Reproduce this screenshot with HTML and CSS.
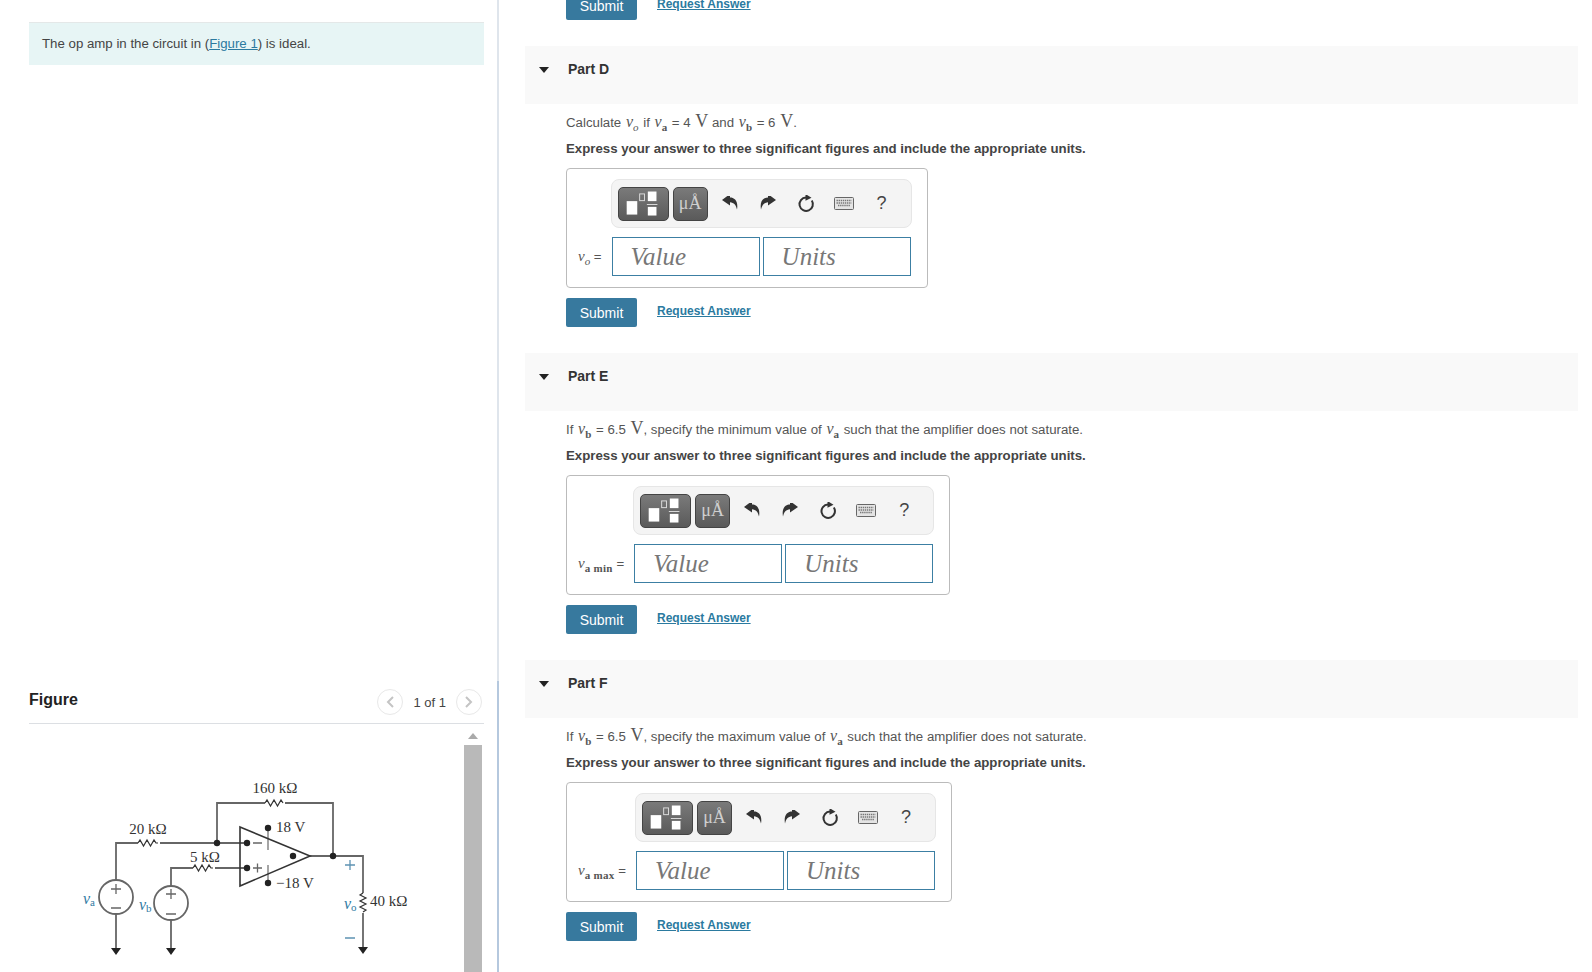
FILE: index.html

```html
<!DOCTYPE html>
<html lang="en">
<head>
  <meta charset="UTF-8">
  <title>Op Amp Problem</title>
  <link rel="stylesheet" href="styles.css">
</head>
<body>
  <svg class="defs" width="0" height="0">
    <defs>
      <symbol id="ic-template" viewBox="0 0 51 34">
        <rect x="8" y="14" width="11" height="14" fill="#fff"/>
        <rect x="21.500" y="6.500" width="5" height="7" fill="none" stroke="#ddd"/>
        <rect x="30" y="4" width="9" height="10" fill="#fff"/>
        <rect x="29" y="17" width="11" height="1" fill="#ddd"/>
        <rect x="30" y="20" width="9" height="9" fill="#fff"/>
      </symbol>
      <symbol id="ic-undo" viewBox="0 2 16 16">
        <path d="M0 6 L8 0 V3.500 C12.500 3.500 16.500 7 15 15.500 C14 11 12 8.500 8 8.200 V11.500 Z" fill="#333"/>
      </symbol>
      <symbol id="ic-redo" viewBox="0 2 16 16">
        <path d="M16 6 L8 0 V3.500 C3.500 3.500 -0.500 7 1 15.500 C2 11 4 8.500 8 8.200 V11.500 Z" fill="#333"/>
      </symbol>
      <symbol id="ic-reset" viewBox="0 1 18 18">
        <path d="M9 3.500 A6.700 6.700 0 1 0 14.800 6.500" fill="none" stroke="#333" stroke-width="2"/>
        <path d="M8.500 0 L14.500 3.800 L8.500 6.800 Z" fill="#333"/>
      </symbol>
      <symbol id="ic-keys" viewBox="0 0 20 13">
        <rect x="0.500" y="0.500" width="19" height="12" rx="1" fill="#e4e4e4" stroke="#666"/>
        <path d="M2.500 3.500 H17.500 M2.500 6 H17.500 M4 8.500 H16" stroke="#777" stroke-width="1.300" stroke-dasharray="1.400 .7"/>
      </symbol>
    </defs>
  </svg>

  <div class="page">
    <div class="left">
      <div class="intro">The op amp in the circuit in (<a href="#">Figure 1</a>) is ideal.</div>

      <div class="figure-head">
        <strong>Figure</strong>
        <div class="pager">
          <span class="pager-btn">
            <svg width="8" height="12" viewBox="0 0 8 12"><path d="M7 1 L2 6 L7 11" fill="none" stroke="#c4c4c4" stroke-width="2"/></svg>
          </span>
          <span class="pager-text">1 of 1</span>
          <span class="pager-btn">
            <svg width="8" height="12" viewBox="0 0 8 12"><path d="M1 1 L6 6 L1 11" fill="none" stroke="#c4c4c4" stroke-width="2"/></svg>
          </span>
        </div>
      </div>

      <div class="figure-body">
        <svg class="circuit" width="432" height="248" viewBox="29 724 432 248">
          <g class="wire">
            <path d="M217 843 V803 H265 M285 803 H333 V856"/>
            <path d="M265 803 l2 -3 l3.500 6 l3.500 -6 l3.500 6 l3.500 -6 l2 3" class="zig"/>
            <path d="M116 880 V843 H138 M160 843 H247"/>
            <path d="M138 843 l2 -3 l3.500 6 l3.500 -6 l3.500 6 l3.500 -6 l2 3 l2 0" class="zig"/>
            <path d="M171 886 V868 H193 M215 868 H247"/>
            <path d="M193 868 l2 -3 l3.500 6 l3.500 -6 l3.500 6 l3.500 -6 l2 3 l2 0" class="zig"/>
            <path d="M116 914 V948 M171 920 V948 M310 856 H363 V893 M363 913 V948"/>
            <path d="M363 893 l-3 2 l6 3 l-6 3 l6 3 l-6 3 l6 3 l-3 2" class="zig"/>
            <path d="M268 828 V850 M268 865 V883" class="thin"/>
            <circle cx="116" cy="897" r="17" class="source"/>
            <circle cx="171" cy="903" r="17" class="source"/>
          </g>
          <path d="M240 827 L310 856 L240 886 Z" class="amp"/>
          <g class="dot">
            <circle cx="217" cy="843" r="3.200"/>
            <circle cx="247" cy="843" r="3.200"/>
            <circle cx="247" cy="868" r="3.200"/>
            <circle cx="293" cy="856" r="3.200"/>
            <circle cx="333" cy="856" r="3.200"/>
            <circle cx="268" cy="828" r="3.200"/>
            <circle cx="268" cy="883" r="3.200"/>
            <path d="M111 948 H121 L116 955 Z M166 948 H176 L171 955 Z M358 947 H368 L363 954 Z"/>
          </g>
          <g class="sign">
            <path d="M111 889 H121 M116 884 V894 M111 908 H121"/>
            <path d="M166 894 H176 M171 889 V899 M166 914 H176"/>
            <path d="M253 843 H262 M253 868 H262 M257.500 863.500 V872.500"/>
          </g>
          <g class="sign-blue">
            <path d="M345 865 H355 M350 860 V870 M345 938 H355"/>
          </g>
          <text x="275" y="793" class="lbl mid">160 kΩ</text>
          <text x="148" y="834" class="lbl mid">20 kΩ</text>
          <text x="205" y="862" class="lbl mid">5 kΩ</text>
          <text x="276" y="832" class="lbl">18 V</text>
          <text x="276" y="888" class="lbl">−18 V</text>
          <text x="370" y="906" class="lbl">40 kΩ</text>
          <text x="83" y="904" class="var">v<tspan class="var-sub" dy="2">a</tspan></text>
          <text x="139" y="910" class="var">v<tspan class="var-sub" dy="2">b</tspan></text>
          <text x="344" y="909" class="var">v<tspan class="var-sub" dy="2">o</tspan></text>
        </svg>
        <div class="scroll">
          <span class="scroll-up"></span>
          <span class="scroll-thumb"></span>
        </div>
      </div>
    </div>

    <div class="right">
      <div class="actions first">
        <button class="submit">Submit</button>
        <a class="req" href="#">Request Answer</a>
      </div>

      <section class="part">
        <div class="part-head"><span class="caret"></span>Part D</div>
        <p class="q">Calculate <i class="v">v<sub>o</sub></i> if <i class="v">v<sub class="up">a</sub></i> = 4 <span class="unit">V</span> and <i class="v">v<sub class="up">b</sub></i> = 6 <span class="unit">V</span>.</p>
        <p class="hint">Express your answer to three significant figures and include the appropriate units.</p>
        <div class="answer">
          <div class="toolbar">
            <span class="tool-btn wide"><svg width="51" height="34"><use href="#ic-template"/></svg></span>
            <span class="tool-btn mu">μÅ</span>
            <span class="tool"><svg width="16" height="16"><use href="#ic-undo"/></svg></span>
            <span class="tool"><svg width="16" height="16"><use href="#ic-redo"/></svg></span>
            <span class="tool"><svg width="18" height="18"><use href="#ic-reset"/></svg></span>
            <span class="tool"><svg width="20" height="13"><use href="#ic-keys"/></svg></span>
            <span class="tool help">?</span>
          </div>
          <label class="ans-label"><i class="v">v<sub>o</sub></i> =</label>
          <div class="inputs">
            <input type="text" placeholder="Value">
            <input type="text" placeholder="Units">
          </div>
        </div>
        <div class="actions">
          <button class="submit">Submit</button>
          <a class="req" href="#">Request Answer</a>
        </div>
      </section>

      <section class="part">
        <div class="part-head"><span class="caret"></span>Part E</div>
        <p class="q">If <i class="v">v<sub class="up">b</sub></i> = 6.5 <span class="unit">V</span>, specify the minimum value of <i class="v">v<sub class="up">a</sub></i> such that the amplifier does not saturate.</p>
        <p class="hint">Express your answer to three significant figures and include the appropriate units.</p>
        <div class="answer">
          <div class="toolbar">
            <span class="tool-btn wide"><svg width="51" height="34"><use href="#ic-template"/></svg></span>
            <span class="tool-btn mu">μÅ</span>
            <span class="tool"><svg width="16" height="16"><use href="#ic-undo"/></svg></span>
            <span class="tool"><svg width="16" height="16"><use href="#ic-redo"/></svg></span>
            <span class="tool"><svg width="18" height="18"><use href="#ic-reset"/></svg></span>
            <span class="tool"><svg width="20" height="13"><use href="#ic-keys"/></svg></span>
            <span class="tool help">?</span>
          </div>
          <label class="ans-label"><i class="v">v<sub class="up">a min</sub></i> =</label>
          <div class="inputs">
            <input type="text" placeholder="Value">
            <input type="text" placeholder="Units">
          </div>
        </div>
        <div class="actions">
          <button class="submit">Submit</button>
          <a class="req" href="#">Request Answer</a>
        </div>
      </section>

      <section class="part">
        <div class="part-head"><span class="caret"></span>Part F</div>
        <p class="q">If <i class="v">v<sub class="up">b</sub></i> = 6.5 <span class="unit">V</span>, specify the maximum value of <i class="v">v<sub class="up">a</sub></i> such that the amplifier does not saturate.</p>
        <p class="hint">Express your answer to three significant figures and include the appropriate units.</p>
        <div class="answer">
          <div class="toolbar">
            <span class="tool-btn wide"><svg width="51" height="34"><use href="#ic-template"/></svg></span>
            <span class="tool-btn mu">μÅ</span>
            <span class="tool"><svg width="16" height="16"><use href="#ic-undo"/></svg></span>
            <span class="tool"><svg width="16" height="16"><use href="#ic-redo"/></svg></span>
            <span class="tool"><svg width="18" height="18"><use href="#ic-reset"/></svg></span>
            <span class="tool"><svg width="20" height="13"><use href="#ic-keys"/></svg></span>
            <span class="tool help">?</span>
          </div>
          <label class="ans-label"><i class="v">v<sub class="up">a max</sub></i> =</label>
          <div class="inputs">
            <input type="text" placeholder="Value">
            <input type="text" placeholder="Units">
          </div>
        </div>
        <div class="actions">
          <button class="submit">Submit</button>
          <a class="req" href="#">Request Answer</a>
        </div>
      </section>
    </div>
  </div>
</body>
</html>
```

FILE: styles.css

```css
html, body {
  margin: 0;
  height: 100%;
  overflow: hidden;
  background: #fff;
}
body {
  font-family: "Liberation Sans", Arial, sans-serif;
  font-size: 13.25px;
  color: #444;
}
.defs {
  position: absolute;
}
.page {
  display: flex;
  height: 972px;
  overflow: hidden;
}

/* left column */
.left {
  width: 499px;
  box-sizing: border-box;
  padding: 22px 13px 0 29px;
  border-right: 2px solid;
  border-image: linear-gradient(#dfe5ec 70%, #b5c8de 70%) 1;
}
.intro {
  height: 43px;
  box-sizing: border-box;
  padding: 13px 13px 0;
  background: #e7f5f5;
  border-top: 1px solid #e4e8e8;
  line-height: 16px;
}
a {
  color: #2b7a9f;
}
.figure-head {
  display: flex;
  justify-content: space-between;
  align-items: center;
  height: 48px;
  margin-top: 609px;
  padding-bottom: 1px;
  border-bottom: 1px solid #dcdfe3;
}
.figure-head strong {
  font-size: 16px;
  color: #222;
  margin-top: 4px;
}
.pager {
  display: flex;
  align-items: center;
  gap: 10px;
  margin-right: 2px;
  margin-top: 8px;
}
.pager-text {
  font-size: 13px;
}
.pager-btn {
  display: flex;
  align-items: center;
  justify-content: center;
  width: 24px;
  height: 24px;
  border: 1px solid #e8e8e8;
  border-radius: 50%;
}
.figure-body {
  display: flex;
  justify-content: space-between;
}
.circuit {
  display: block;
}
.scroll {
  width: 18px;
  margin-right: 2px;
  height: 248px;
}
.scroll-up {
  display: block;
  width: 0;
  margin: 9px auto 0;
  border: 5px solid transparent;
  border-top: 0;
  border-bottom: 6px solid #aaa;
}
.scroll-thumb {
  display: block;
  height: 300px;
  margin-top: 6px;
  background: #b9b9b9;
}

/* circuit */
.wire path, .wire circle {
  fill: none;
  stroke: #666;
  stroke-width: 1.8;
}
.wire .zig {
  stroke: #333;
  stroke-width: 1.2;
}
.wire .thin {
  stroke: #888;
  stroke-width: 1.5;
}
.amp {
  fill: none;
  stroke: #333;
  stroke-width: 1.6;
}
.dot {
  fill: #222;
}
.sign path {
  fill: none;
  stroke: #666;
  stroke-width: 1.3;
}
.sign-blue path {
  fill: none;
  stroke: #5d93b3;
  stroke-width: 1.3;
}
.lbl {
  font-family: "Liberation Serif", serif;
  font-size: 15px;
  fill: #333;
}
.mid {
  text-anchor: middle;
}
.var {
  font-family: "Liberation Serif", serif;
  font-style: italic;
  font-size: 16px;
  fill: #2f7aa3;
}
.var-sub {
  font-size: 11px;
  font-style: normal;
}

/* right column */
.right {
  flex: 1;
  padding: 0 14px 0 26px;
  min-width: 0;
}
.actions {
  display: flex;
  align-items: center;
  gap: 20px;
  height: 29px;
  margin: 10px 0 26px 41px;
}
.actions.first {
  margin-top: -9px;
}
.submit {
  width: 71px;
  height: 29px;
  padding: 0;
  border: 0;
  border-radius: 2px;
  background: #37799e;
  color: #fff;
  font: 14px "Liberation Sans", Arial, sans-serif;
}
.req {
  font-size: 12px;
  font-weight: bold;
  margin-top: -3px;
}
.part-head {
  position: relative;
  height: 58px;
  box-sizing: border-box;
  padding: 15px 0 0 43px;
  background: #f9f9f9;
  font-size: 14px;
  font-weight: bold;
  color: #333;
  line-height: 17px;
}
.caret {
  position: absolute;
  left: 14px;
  top: 21px;
  border: 5px solid transparent;
  border-top: 6px solid #222;
  border-bottom: 0;
}
.q, .hint {
  margin: 0 0 0 41px;
  height: 18px;
  line-height: 18px;
}
.q {
  margin-top: 8px;
  color: #555;
}
.hint {
  margin-top: 10px;
  font-weight: bold;
}
.v {
  font-family: "Liberation Serif", serif;
  font-size: 16px;
}
.q .v {
  margin: 0 1px;
}
sub {
  font-size: 11px;
  line-height: 0;
}
sub.up {
  font-style: normal;
  font-weight: bold;
}
.unit {
  font-family: "Liberation Serif", serif;
  font-size: 18px;
  padding-left: 1px;
}

/* answer box */
.answer {
  display: grid;
  grid-template-columns: auto auto;
  width: fit-content;
  column-gap: 10px;
  row-gap: 9px;
  margin: 10px 0 0 41px;
  padding: 10px 15px 11px 11px;
  border: 1px solid #bbb;
  border-radius: 4px;
}
.toolbar {
  grid-column: 2;
  display: flex;
  align-items: center;
  width: 301px;
  height: 49px;
  box-sizing: border-box;
  padding-left: 6px;
  margin-left: -1px;
  background: #f4f4f4;
  border: 1px solid #e6e6e6;
  border-radius: 8px;
}
.tool-btn {
  display: flex;
  align-items: center;
  justify-content: center;
  height: 34px;
  box-sizing: border-box;
  background: linear-gradient(#7a7a7a, #5a5a5a);
  border: 1px solid #444;
  border-radius: 5px;
}
.tool-btn.wide {
  width: 51px;
}
.tool-btn.mu {
  width: 35px;
  margin: 0 3px 0 4px;
  color: #cfcfcf;
  font-family: "Liberation Serif", serif;
  font-size: 18px;
}
.tool {
  display: flex;
  align-items: center;
  justify-content: center;
  width: 38px;
  height: 34px;
}
.help {
  font-size: 18px;
  color: #444;
}
.ans-label {
  grid-column: 1;
  align-self: center;
  white-space: nowrap;
  color: #555;
}
.ans-label .v {
  font-size: 15px;
}
.ans-label sub {
  font-family: "Liberation Serif", serif;
}
.ans-label sub.up {
  letter-spacing: 0.3px;
}
.inputs {
  display: flex;
  gap: 3px;
}
input {
  width: 148px;
  height: 39px;
  box-sizing: border-box;
  padding: 0 18px;
  border: 1px solid #3c7fa3;
  background: #fff;
  font: italic 25px "Liberation Serif", serif;
}
input::placeholder {
  color: #777;
  opacity: 1;
}
```
